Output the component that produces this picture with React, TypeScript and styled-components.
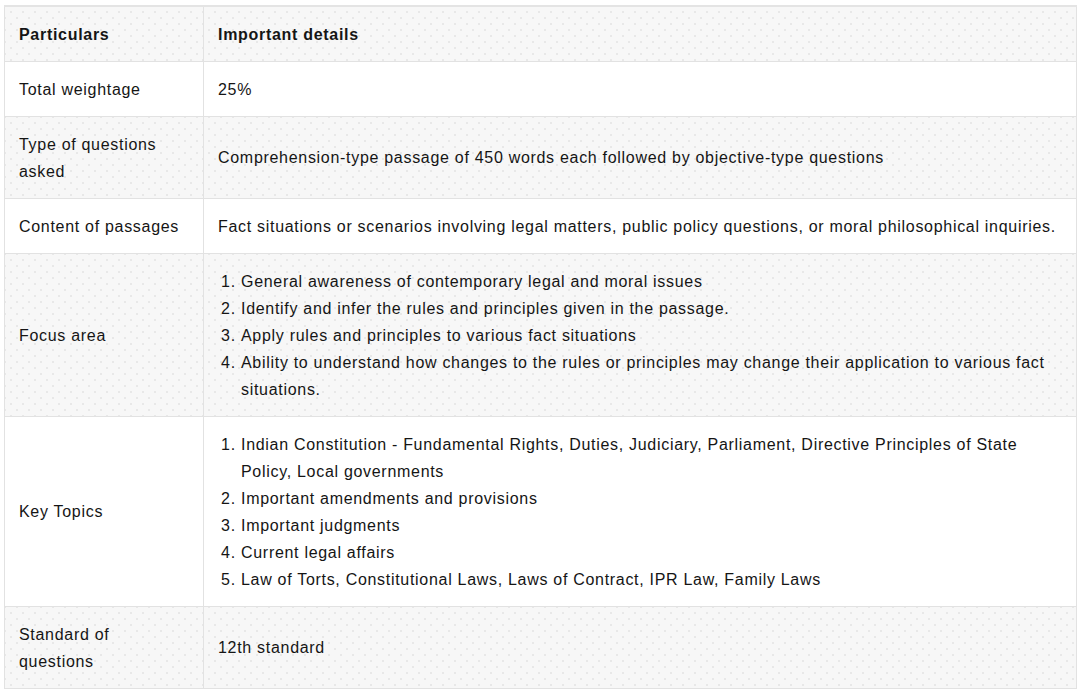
import styled, { createGlobalStyle } from "styled-components";

type Row = {
  label: string;
  detail?: string;
  items?: string[];
};

const rows: Row[] = [
  { label: "Total weightage", detail: "25%" },
  {
    label: "Type of questions asked",
    detail:
      "Comprehension-type passage of 450 words each followed by objective-type questions",
  },
  {
    label: "Content of passages",
    detail:
      "Fact situations or scenarios involving legal matters, public policy questions, or moral philosophical inquiries.",
  },
  {
    label: "Focus area",
    items: [
      "General awareness of contemporary legal and moral issues",
      "Identify and infer the rules and principles given in the passage.",
      "Apply rules and principles to various fact situations",
      "Ability to understand how changes to the rules or principles may change their application to various fact situations.",
    ],
  },
  {
    label: "Key Topics",
    items: [
      "Indian Constitution - Fundamental Rights, Duties, Judiciary, Parliament, Directive Principles of State Policy, Local governments",
      "Important amendments and provisions",
      "Important judgments",
      "Current legal affairs",
      "Law of Torts, Constitutional Laws, Laws of Contract, IPR Law, Family Laws",
    ],
  },
  { label: "Standard of questions", detail: "12th standard" },
];

export default function App() {
  return (
    <>
      <GlobalStyle />
      <Page>
        <Table>
          <colgroup>
            <col style={{ width: 199 }} />
            <col />
          </colgroup>
          <thead>
            <Tr $shaded>
              <Th>Particulars</Th>
              <Th>Important details</Th>
            </Tr>
          </thead>
          <tbody>
            {rows.map((row, i) => (
              <Tr key={row.label} $shaded={i % 2 === 1}>
                <Td>{row.label}</Td>
                <Td>
                  {row.items ? (
                    <List>
                      {row.items.map((item) => (
                        <li key={item}>{item}</li>
                      ))}
                    </List>
                  ) : (
                    row.detail
                  )}
                </Td>
              </Tr>
            ))}
          </tbody>
        </Table>
      </Page>
    </>
  );
}

const GlobalStyle = createGlobalStyle`
  body {
    margin: 0;
    background: #ffffff;
    font-family: "Liberation Sans", Arial, sans-serif;
  }
`;

const Page = styled.div`
  padding: 5px 6px 0 4px;
`;

const Table = styled.table`
  width: 1073px;
  border-collapse: collapse;
  table-layout: fixed;
  border-top: 2px solid #e4e4e4;
  font-size: 16px;
  line-height: 27px;
  letter-spacing: 0.7px;
  color: #151515;
`;

const Tr = styled.tr<{ $shaded?: boolean }>`
  background-color: ${(p) => (p.$shaded ? "#f7f7f7" : "#ffffff")};
  background-image: ${(p) =>
    p.$shaded
      ? "radial-gradient(circle, #e0e0e0 0.6px, transparent 0.9px), radial-gradient(circle, #e0e0e0 0.6px, transparent 0.9px)"
      : "none"};
  background-size: 12px 12px;
  background-position: 0 0, 6px 6px;
`;

const Th = styled.th`
  border: 1px solid #e2e2e2;
  padding: 13.5px 15px 13.5px 14px;
  text-align: left;
  font-weight: bold;
  vertical-align: middle;
`;

const Td = styled.td`
  border: 1px solid #e2e2e2;
  padding: 13.5px 15px 13.5px 14px;
  text-align: left;
  vertical-align: middle;
`;

const List = styled.ol`
  margin: 0;
  padding-left: 23px;
`;
